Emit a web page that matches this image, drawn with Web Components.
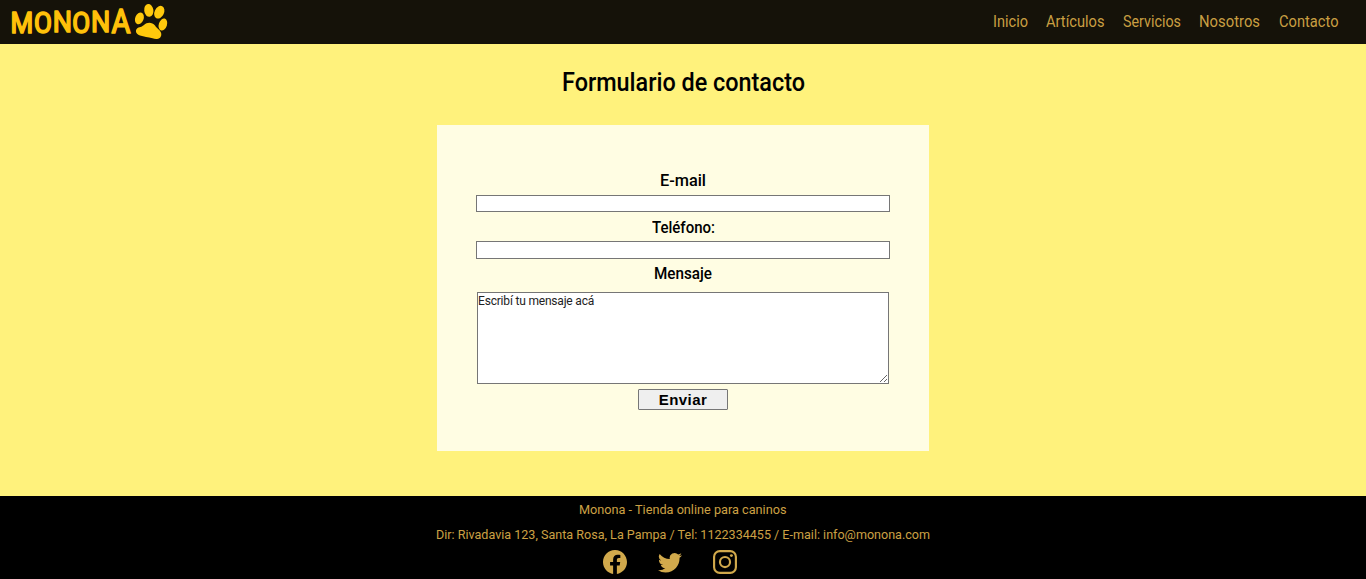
<!DOCTYPE html>
<html lang="es"><head><meta charset="utf-8"><title>Monona - Contacto</title>
<style>body{margin:0;height:579px;overflow:hidden;background:#fff27c;font-family:Roboto,sans-serif;display:flex;flex-direction:column}</style></head>
<body>
<site-header></site-header>
<contact-page></contact-page>
<site-footer></site-footer>
<script>
// One line of text condensed horizontally to fill the given width.
customElements.define('fit-text', class extends HTMLElement{
  connectedCallback(){
    const r=this.attachShadow({mode:'open'});
    const w=+this.getAttribute('width');
    r.innerHTML=`<style>:host{display:block;width:${w}px;white-space:nowrap}span{display:inline-block;transform-origin:0 50%}</style><span><slot></slot></span>`;
    const s=r.querySelector('span');
    const natural=s.getBoundingClientRect().width;
    if(natural>0) s.style.transform=`scaleX(${(w/natural).toFixed(4)})`;
  }
});
customElements.define('monona-logo', class extends HTMLElement{
  connectedCallback(){
    this.attachShadow({mode:'open'}).innerHTML=`<style>:host{display:block;width:160px;height:44px}svg{display:block}text{font:400 26px Roboto,sans-serif;fill:#ffc10a;stroke:#ffc10a;stroke-width:1.500;stroke-linejoin:round}</style>
    <svg width="160" height="44" viewBox="10 0 160 44">
      <g transform="translate(0 33) scale(1 1.120)"><text y="0"><tspan x="10.500">M</tspan><tspan x="34">O</tspan><tspan x="52.700" y="-.8" font-size="27">N</tspan><tspan x="72.300" y="0">O</tspan><tspan x="91" y="-.8" font-size="27">N</tspan><tspan x="111.500" y="-.3" font-size="29">A</tspan></text></g>
      <g fill="#ffc90c">
      <ellipse cx="148.800" cy="10.400" rx="4.600" ry="6.500" transform="rotate(-8 148.800 10.400)"/>
      <ellipse cx="159.300" cy="12.200" rx="4.700" ry="6.700" transform="rotate(26 159.300 12.200)"/>
      <ellipse cx="139.400" cy="18.400" rx="4.200" ry="6" transform="rotate(22 139.400 18.400)"/>
      <ellipse cx="162.900" cy="24.500" rx="4.100" ry="6.200" transform="rotate(18 162.900 24.500)"/>
      <path d="M144 25C147 22 152 21.800 155 25.500C157 29 161.500 30.500 161.300 34.500C161 39.500 156 39.500 152.500 38.300C148 36.800 144 37 140 35.500C135 34 134.800 29 138.500 27.500Q141.500 27 144 25Z"/>
      </g></svg>`;
  }
});
customElements.define('site-header', class extends HTMLElement{
  connectedCallback(){
    this.attachShadow({mode:'open'}).innerHTML=`<style>
    :host{display:flex;flex:none;height:44px;box-sizing:border-box;padding:0 28px 0 10px;background:#151209;justify-content:space-between;color:#c99f42}
    nav{display:flex;gap:18.3px;font-size:16.5px;line-height:43px}a{color:inherit}</style>
    <monona-logo></monona-logo><nav><a><fit-text width="35">Inicio</fit-text></a><a><fit-text width="58.500">Artículos</fit-text></a><a><fit-text width="58">Servicios</fit-text></a><a><fit-text width="61">Nosotros</fit-text></a><a><fit-text width="59.500">Contacto</fit-text></a></nav>`;
  }
});
customElements.define('contact-page', class extends HTMLElement{
  connectedCallback(){
    this.attachShadow({mode:'open'}).innerHTML=`<style>
    :host{display:flex;flex-direction:column;align-items:center;height:452px;flex:none}
    h1{margin:0;height:81px;font-size:26px;font-weight:500;line-height:77px}</style>
    <h1><fit-text width="243">Formulario de contacto</fit-text></h1><contact-form></contact-form>`;
  }
});
customElements.define('contact-form', class extends HTMLElement{
  connectedCallback(){
    this.attachShadow({mode:'open'}).innerHTML=`<style>
    :host{display:block;box-sizing:border-box;width:492px;height:326px;padding-top:44px;background:#fffde3}
    form{display:flex;flex-direction:column;align-items:center}
    label{font-size:17px;font-weight:500;line-height:22px;height:22px}
    input,textarea,button{box-sizing:border-box;margin:0;border:1px solid #767676;border-radius:0;padding:0;display:block}
    input{width:414px;background:#fff}
    #mail{height:17px;margin:4px 0}
    #tel{height:18px;margin:3px 0}
    textarea{width:412px;height:92px;margin:8px 0 5px;background:#fff;color:#222;font:12px/16px Roboto,sans-serif;letter-spacing:-.19px;resize:both}
    button{width:90px;height:21px;border-radius:1px;background:#efefef;color:#000;font:700 15px/18px "Liberation Sans",sans-serif;letter-spacing:.4px}</style>
    <form><label for="mail"><fit-text width="46">E-mail</fit-text></label><input id="mail">
    <label for="tel"><fit-text width="63">Teléfono:</fit-text></label><input id="tel">
    <label for="msg"><fit-text width="58">Mensaje</fit-text></label><textarea id="msg">Escribí tu mensaje acá</textarea>
    <button type="button">Enviar</button></form>`;
  }
});
customElements.define('site-footer', class extends HTMLElement{
  connectedCallback(){
    this.attachShadow({mode:'open'}).innerHTML=`<style>
    :host{display:flex;flex-direction:column;align-items:center;height:83px;flex:none;background:#000;color:#cca044;font-size:13.5px;line-height:25px}
    .first{height:26px;line-height:27px}.second{height:28px;line-height:25px}
    .icons{display:flex;gap:31px;margin-right:26px;padding-top:.4px;color:#d1a94c}svg{display:block;fill:currentColor}</style>
    <div class="first"><fit-text width="207.500">Monona - Tienda online para caninos</fit-text></div>
    <div class="second"><fit-text width="494">Dir: Rivadavia 123, Santa Rosa, La Pampa / Tel: 1122334455 / E-mail: info@monona.com</fit-text></div>
    <div class="icons">
    <svg width="24" height="24" viewBox="0 0 16 16"><path d="M16 8.049c0-4.446-3.582-8.050-8-8.050C3.580 0-.002 3.603-.002 8.050c0 4.017 2.926 7.347 6.750 7.951v-5.625h-2.030V8.050H6.750V6.275c0-2.017 1.195-3.131 3.022-3.131.876 0 1.791.157 1.791.157v1.980h-1.009c-.993 0-1.303.621-1.303 1.258v1.510h2.218l-.354 2.326H9.250V16c3.824-.604 6.750-3.934 6.750-7.951z"/></svg>
    <svg width="24" height="24" viewBox="0 0 16 16"><path d="M5.026 15c6.038 0 9.341-5.003 9.341-9.334 0-.140 0-.282-.006-.422A6.685 6.685 0 0 0 16 3.542a6.658 6.658 0 0 1-1.889.518 3.301 3.301 0 0 0 1.447-1.817 6.533 6.533 0 0 1-2.087.793A3.286 3.286 0 0 0 7.875 6.030a9.325 9.325 0 0 1-6.767-3.429 3.289 3.289 0 0 0 1.018 4.382A3.323 3.323 0 0 1 .640 6.575v.045a3.288 3.288 0 0 0 2.632 3.218 3.203 3.203 0 0 1-.865.115 3.230 3.230 0 0 1-.614-.057 3.283 3.283 0 0 0 3.067 2.277A6.588 6.588 0 0 1 .780 13.580a6.320 6.320 0 0 1-.780-.045A9.344 9.344 0 0 0 5.026 15z"/></svg>
    <svg width="24" height="24" viewBox="0 0 24 24"><g fill="none" stroke="currentColor" stroke-width="2.150"><rect x="1.100" y="1.100" width="21.800" height="21.800" rx="5.700"/><circle cx="12" cy="12" r="5.050"/></g><circle cx="18.400" cy="5.600" r="1.450"/></svg></div>`;
  }
});
</script></body></html>
